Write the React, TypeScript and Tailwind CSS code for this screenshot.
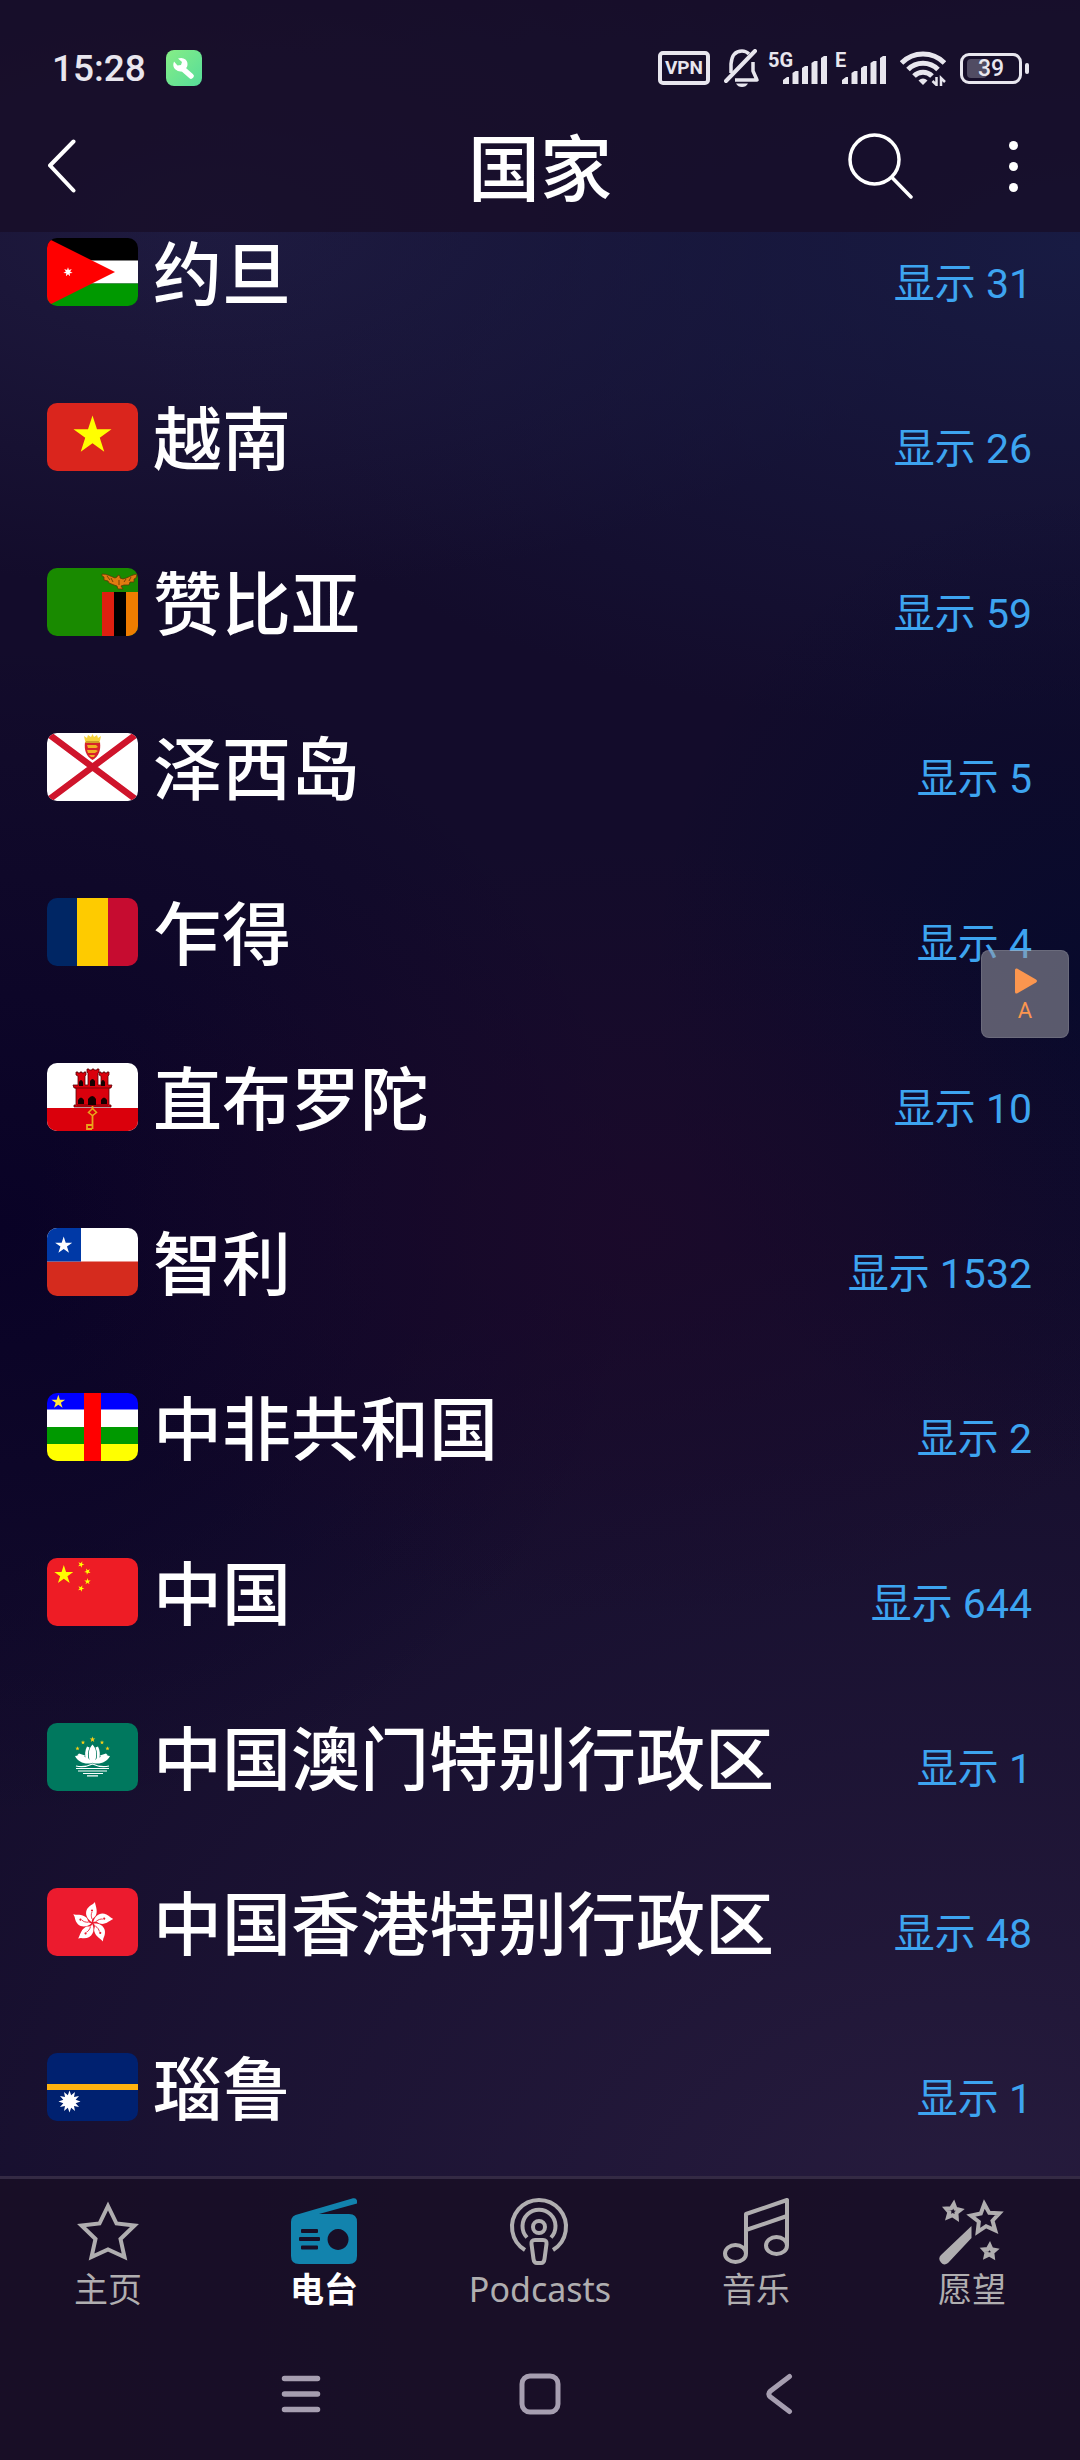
import type { ReactNode } from "react";

/* 生成星形顶点 */
function starPoints(cx: number, cy: number, r: number, inner = 0.382, tips = 5, turn = 0) {
  const points: string[] = [];
  for (let i = 0; i < tips * 2; i++) {
    const radius = i % 2 === 0 ? r : r * inner;
    const angle = (Math.PI * i) / tips - Math.PI / 2 + turn;
    points.push(`${(cx + radius * Math.cos(angle)).toFixed(2)},${(cy + radius * Math.sin(angle)).toFixed(2)}`);
  }
  return points.join(" ");
}

const flags: Record<string, ReactNode> = {
  jo: (
    <>
      <rect width="91" height="23" fill="#000" />
      <rect y="22.5" width="91" height="23" fill="#fff" />
      <rect y="45.5" width="91" height="23" fill="#009900" />
      <path d="M0 0 68 34 0 68Z" fill="#ff0000" />
      <polygon points={starPoints(21, 34, 4.8, 0.45, 7)} fill="#fff" />
    </>
  ),
  vn: (
    <>
      <rect width="91" height="68" fill="#da251d" />
      <polygon points={starPoints(45.5, 32.5, 20)} fill="#ffff00" />
    </>
  ),
  zm: (
    <>
      <rect width="91" height="68" fill="#198a00" />
      <rect x="55" y="24" width="12" height="44" fill="#de2010" />
      <rect x="67" y="24" width="12" height="44" fill="#000" />
      <rect x="79" y="24" width="12" height="44" fill="#ef7d00" />
      <path
        d="M55 6c5 0 8 2 13 4l2-1 1-2 2 1v2l3 1c5-1 8-4 14-5l-1 4-2 1 0 3-4 0-1 3-5 0-3 1 2 3-5 0-1-3-3-1-5-2-1-2-4-1 0-3-2-1z"
        fill="#e07a10"
        stroke="#5a3a08"
        strokeWidth="0.8"
      />
      <path d="M60 8l3 4M64 10l2 4M84 9l-2 4M79 11l-2 3M72 12v5" stroke="#6b3d05" strokeWidth="0.9" />
    </>
  ),
  je: (
    <>
      <rect width="91" height="68" fill="#fff" />
      <path d="M0 0 91 68M91 0 0 68" stroke="#cf142b" strokeWidth="6.5" />
      <path d="M38 9h15c1 8-1 14-7.5 18C39 23 37 17 38 9Z" fill="#d8222a" />
      <path d="M40 12h9l2 2-2 1h-8zM40 17h9l2 1-3 2h-7zM42 22h6l-1 2h-3z" fill="#f0b020" />
      <path d="M37 3l3 2 1-3 3 2 1.5-3 1.5 3 3-2 1 3 3-2-1.5 7h-14z" fill="#f7d23c" />
      <path d="M39 9h13" stroke="#a86a10" strokeWidth="1" />
    </>
  ),
  td: (
    <>
      <rect width="31" height="68" fill="#002664" />
      <rect x="30" width="31" height="68" fill="#fecb00" />
      <rect x="61" width="30" height="68" fill="#c60c30" />
    </>
  ),
  gi: (
    <>
      <rect width="91" height="68" fill="#fff" />
      <rect y="45" width="91" height="23" fill="#da000c" />
      <path
        d="M27 44v-2h2V25h-2l-1-3h5V13l-2-1V9h2v1h2V9h2v1h2V9h2v3l-1 1v9h3V10l-1-1V6h2v1h3V6h2v1h3V6h2v3l-1 1v12h3v-9l-2-1V9h2v1h2V9h2v1h2V9h2v3l-1 1v9h4l-1 3h-2v17h2v2z"
        fill="#da000c"
        stroke="#5c0006"
        strokeWidth="0.8"
      />
      <path d="M28 25h35M30 42h31" stroke="#7a0008" strokeWidth="1" />
      <path
        d="M41 42v-6q4.5-6 8 0v6zM31 41v-4q3-5 6 0v4zM54 41v-4q3-5 6 0v4zM43 23v-5q2.5-4 5 0v5zM32 23v-4q2-4 4 0v4zM54 23v-4q2-4 4 0v4z"
        fill="#160000"
      />
      <path d="M45.5 43v23M45 62h-5v4h5" stroke="#e8a51c" strokeWidth="1.8" fill="none" />
      <path d="M45.5 45.5l4 4-4 3-4-3z" fill="#da000c" stroke="#e8a51c" strokeWidth="1.5" />
    </>
  ),
  cl: (
    <>
      <rect width="91" height="34" fill="#fff" />
      <rect y="33.5" width="91" height="35" fill="#d52b1e" />
      <rect width="34" height="33.5" fill="#0039a6" />
      <polygon points={starPoints(16.7, 17.5, 9)} fill="#fff" />
    </>
  ),
  cf: (
    <>
      <rect width="91" height="17" fill="#0000ff" />
      <rect y="16.5" width="91" height="18" fill="#fff" />
      <rect y="34" width="91" height="17" fill="#009900" />
      <rect y="51" width="91" height="17" fill="#ffff00" />
      <rect x="37" width="17" height="68" fill="#ff0000" />
      <polygon points={starPoints(11.3, 9, 7.2)} fill="#ffe83a" />
    </>
  ),
  cn: (
    <>
      <rect width="91" height="68" fill="#ee1c25" />
      <polygon points={starPoints(16.8, 17, 10)} fill="#ffff00" />
      <polygon points={starPoints(34, 6.5, 3.4, 0.382, 5, 0.4)} fill="#ffff00" />
      <polygon points={starPoints(40.5, 13.5, 3.4, 0.382, 5, 0.8)} fill="#ffff00" />
      <polygon points={starPoints(40.5, 23.5, 3.4)} fill="#ffff00" />
      <polygon points={starPoints(34, 30.5, 3.4, 0.382, 5, 0.4)} fill="#ffff00" />
    </>
  ),
  mo: (
    <>
      <rect width="91" height="68" fill="#00785e" />
      <g fill="#fbd116">
        <polygon points={starPoints(45.5, 16.5, 3)} />
        <polygon points={starPoints(36, 19.5, 2.3)} />
        <polygon points={starPoints(55, 19.5, 2.3)} />
        <polygon points={starPoints(30.5, 25.5, 2.3)} />
        <polygon points={starPoints(60.5, 25.5, 2.3)} />
      </g>
      <g fill="#fff">
        <path d="M45.5 21.5c4 4 5 11 2 18h-4c-3-7-2-14 2-18z" />
        <path d="M40 23.5l2.5 1c-2 5-2 9-.5 13l-3-1c-1.5-5-1-9 1-13zM51 23.5l-2.5 1c2 5 2 9 .5 13l3-1c1.5-5 1-9-1-13z" />
        <path d="M28 33c7-1 13 1 17.5 6.5C51 34 56 32 63 33c-3 6-10 9-17.5 7C38 42 31 39 28 33z" />
        <path d="M32 30.5l6 2-1 2-7-2zM59 30.5l-6 2 1 2 7-2z" />
      </g>
      <path
        d="M29 43q8 2 16.5-2 8.5 4 16.5 2M29 45.5h33M31 48h29M36 50.5h20M40 52.8h11"
        stroke="#fff"
        strokeWidth="1.2"
        fill="none"
      />
    </>
  ),
  hk: (
    <>
      <rect width="91" height="68" fill="#ec1b2e" />
      {[0, 72, 144, 216, 288].map((deg) => (
        <g key={deg} transform={`rotate(${deg} 45.5 35)`}>
          <path d="M45 34C38 30 36 21 46 16l2-2c0 3 3 8 1 13-1 3-5 3-4 7z" fill="#fff" />
          <path d="M45 31c-1-3-1-5 0-7" stroke="#ec1b2e" strokeWidth="0.8" fill="none" />
          <circle cx="45" cy="22.5" r="1.1" fill="#ec1b2e" />
        </g>
      ))}
    </>
  ),
  nr: (
    <>
      <rect width="91" height="68" fill="#002170" />
      <rect y="31" width="91" height="6" fill="#ffb20f" />
      <polygon points={starPoints(22.5, 48.5, 11, 0.58, 12)} fill="#fff" />
    </>
  ),
};

const countries = [
  { code: "jo", name: "约旦", count: 31 },
  { code: "vn", name: "越南", count: 26 },
  { code: "zm", name: "赞比亚", count: 59 },
  { code: "je", name: "泽西岛", count: 5 },
  { code: "td", name: "乍得", count: 4 },
  { code: "gi", name: "直布罗陀", count: 10 },
  { code: "cl", name: "智利", count: 1532 },
  { code: "cf", name: "中非共和国", count: 2 },
  { code: "cn", name: "中国", count: 644 },
  { code: "mo", name: "中国澳门特别行政区", count: 1 },
  { code: "hk", name: "中国香港特别行政区", count: 48 },
  { code: "nr", name: "瑙鲁", count: 1 },
];

const tabs = [
  {
    name: "主页",
    icon: (
      <path
        d="M33 8 41.5 25.5 59.5 27.5 45.5 41 49.5 59 33 51.5 16.5 59 20.5 41 6.5 27.5 24.5 25.5Z"
        fill="none"
        stroke="currentColor"
        strokeWidth="4"
        strokeMiterlimit="10"
      />
    ),
  },
  {
    name: "电台",
    active: true,
    icon: (
      <path
        fillRule="evenodd"
        fill="#1283ad"
        d="M8 16 62 .3q3-.8 4 2.2v3L28 16h30q8 0 8 8v34q0 8-8 8H8q-8 0-8-8V24q0-7 8-8ZM11 31q-1 0-1 1v2q0 1 1 1h15q1 0 1-1v-2q0-1-1-1ZM9 39q-1 0-1 1v2q0 1 1 1h19q1 0 1-1v-2q0-1-1-1ZM11 47.5q-1 0-1 1v2q0 1 1 1h15q1 0 1-1v-2q0-1-1-1ZM47 31a10.5 10.5 0 1 0 .1 0Z"
      />
    ),
  },
  {
    name: "Podcasts",
    icon: (
      <g fill="none" stroke="currentColor" strokeWidth="4" strokeLinecap="butt">
        <circle cx="32" cy="29" r="6" />
        <path d="M20 39.5a16.5 16.5 0 1 1 24 0" />
        <path d="M18 52a27 27 0 1 1 28 0" />
        <path d="M28 42h8q4 0 3.5 4l-2 15q-.5 4-3.5 4h-4q-3 0-3.5-4l-2-15q-.5-4 3.5-4z" />
      </g>
    ),
  },
  {
    name: "音乐",
    icon: (
      <g fill="none" stroke="currentColor" strokeWidth="4" strokeLinejoin="round">
        <ellipse cx="12.5" cy="55.5" rx="10.5" ry="8.5" />
        <ellipse cx="53.5" cy="47.5" rx="10.5" ry="8.5" />
        <path d="M23 55.5V16L64 2v45.5M23 32 64 18" />
      </g>
    ),
  },
  {
    name: "愿望",
    icon: (
      <>
        <polygon
          points={starPoints(46.5, 21, 15, 0.48, 5, -0.08)}
          fill="none"
          stroke="currentColor"
          strokeWidth="4"
          strokeMiterlimit="10"
        />
        <polygon points={starPoints(14, 13.5, 7.5, 0.5, 5, 0.1)} fill="none" stroke="currentColor" strokeWidth="4" />
        <polygon points={starPoints(50.5, 53.5, 6, 0.5, 5, 0.05)} fill="none" stroke="currentColor" strokeWidth="4" />
        <path d="M32.5 28v12L9 65q-4 3-7-.5-3.5-4 0-7.5Z" fill="currentColor" />
      </>
    ),
  },
];

function Signal({ label, width }: { label: string; width: string }) {
  return (
    <div className={`relative flex h-8 items-end justify-end ${width}`}>
      <span className="absolute top-0 left-0 text-[20px] leading-4 font-bold">{label}</span>
      <svg viewBox="0 0 44 28" className="h-7 w-11" fill="currentColor">
        <path d="M0 28v-4l4-3h2v7zM9.5 28V17l3-2h3v13zM19 28V12l3-2h3v18zM28.5 28V7l3-2h3v23zM38 28V2l3-2h3v28z" />
      </svg>
    </div>
  );
}

function StatusBar() {
  return (
    <div className="flex h-[100px] items-center justify-between pt-9 pr-[51px] pl-[52px] text-[#e8e6ee]">
      <div className="flex items-center gap-5">
        <span className="text-[37px] leading-none font-medium">15:28</span>
        <svg viewBox="0 0 36 36" className="size-9">
          <defs>
            <linearGradient id="tool" x1="0" y1="0" x2="1" y2="1">
              <stop offset="0" stopColor="#86ee86" />
              <stop offset="1" stopColor="#56dc9a" />
            </linearGradient>
          </defs>
          <rect width="36" height="36" rx="8" fill="url(#tool)" />
          <path d="M17 19l8 7" stroke="#fff" strokeWidth="5.5" strokeLinecap="round" />
          <path d="M12 8.5l4 3.5-1 3-3.5.5-3.5-4q-2 5 1.5 8t7.5 1.5l4-4q1.5-5-1.5-7.5t-7.5-1z" fill="#fff" />
        </svg>
      </div>
      <div className="flex items-center gap-3.5">
        <span className="flex h-[34px] w-[52px] items-center justify-center rounded-[5px] border-4 border-current text-[19px] font-bold">
          VPN
        </span>
        <div className="flex items-center gap-2">
          <svg viewBox="0 0 36 38" className="h-[38px] w-9" fill="none" stroke="currentColor" strokeWidth="3.5">
            <path d="M2 32 31 2" strokeWidth="4" strokeLinecap="round" />
            <path d="M7 24V15Q8 2 18 2q4 0 7 3M29 13v9l4 9H11" strokeLinejoin="round" />
            <path d="M12 34.5h12q-2 3.5-6 3.5t-6-3.5z" fill="currentColor" stroke="none" />
          </svg>
          <Signal label="5G" width="w-[59px]" />
          <Signal label="E" width="w-[51px]" />
        </div>
        <svg viewBox="0 0 46 35" className="h-[35px] w-[46px]" fill="none" stroke="currentColor" strokeWidth="5">
          <path d="M1.5 12a30 30 0 0 1 43 0M8 18.5a21 21 0 0 1 30 0M14 25a12.5 12.5 0 0 1 18 0" />
          <path d="M23 34l-4.5-4.5q4.5-4 9 0z" fill="currentColor" stroke="none" />
          <path d="M36.5 26v8l-4-4M41 35v-8l4 4" strokeWidth="2.5" />
        </svg>
        <div className="flex items-center gap-[3px]">
          <div className="relative flex h-[31px] w-[62px] items-center justify-center rounded-[9px] border-[3px] border-current">
            <span className="absolute top-[3px] left-[4px] h-[19px] w-[20px] rounded-[4px] bg-[#514c63]" />
            <span className="relative text-[23px] leading-none font-medium">39</span>
          </div>
          <span className="h-[11px] w-1 rounded-sm bg-current" />
        </div>
      </div>
    </div>
  );
}

function Header() {
  return (
    <header className="bg-[#180e28]/80">
      <StatusBar />
      <div className="grid h-[132px] grid-cols-[1fr_auto_1fr] items-center px-12">
        <button aria-label="返回" className="w-8">
          <svg viewBox="0 0 32 54" className="h-[54px] w-8" fill="none" stroke="currentColor" strokeWidth="4">
            <path d="M25.5 2.5 2 26.5 25.5 51.5" strokeLinecap="round" strokeLinejoin="round" />
          </svg>
        </button>
        <h1 className="pt-2.5 text-[72px] leading-none font-medium">国家</h1>
        <div className="flex items-center justify-end gap-[84px] pr-1">
          <button aria-label="搜索">
            <svg viewBox="0 0 66 66" className="size-[66px]" fill="none" stroke="currentColor" strokeWidth="3.5">
              <circle cx="26.5" cy="26.5" r="24.5" />
              <path d="M44.5 45 63 64" strokeLinecap="round" />
            </svg>
          </button>
          <button aria-label="更多" className="flex w-[30px] flex-col items-center gap-3">
            <span className="size-[9px] rounded-full bg-white" />
            <span className="size-[9px] rounded-full bg-white" />
            <span className="size-[9px] rounded-full bg-white" />
          </button>
        </div>
      </div>
    </header>
  );
}

export default function App() {
  return (
    <div
      lang="zh-CN"
      className="relative flex min-h-screen flex-col bg-[#130c2b] bg-[radial-gradient(ellipse_55%_16%_at_58%_50%,#1c092acc,transparent),radial-gradient(ellipse_60%_24%_at_0%_50%,#090226,transparent),radial-gradient(ellipse_40%_20%_at_100%_40%,#080a2c,transparent),radial-gradient(ellipse_90%_20%_at_100%_10%,#181b43,transparent),radial-gradient(ellipse_70%_15%_at_20%_9%,#1f1b40,transparent),radial-gradient(ellipse_120%_42%_at_90%_92%,#271c3e,transparent)] font-['Roboto','Noto_Sans_CJK_SC',sans-serif] text-white"
    >
      <Header />

      <main className="flex-1 overflow-hidden pt-1.5 pb-[55px]">
        <ul className="flex flex-col gap-[97px] pr-12 pl-[47px]">
          {countries.map((country) => (
            <li key={country.code}>
              <a href={`#${country.code}`} className="flex h-[68px] items-center">
                <svg viewBox="0 0 91 68" className="h-[68px] w-[91px] shrink-0 rounded-[10px]">
                  {flags[country.code]}
                </svg>
                <span className="ml-[15px] pt-2.5 text-[69px] leading-[68px] font-medium whitespace-nowrap">{country.name}</span>
                <span className="ml-auto pt-6 text-[41px] leading-none whitespace-nowrap text-[#3da4f0]">
                  显示 {country.count}
                </span>
              </a>
            </li>
          ))}
        </ul>
      </main>

      <footer className="border-t-[3px] border-[#342a44] bg-[#180e26]/90">
        <nav className="grid grid-cols-5 pt-[19px]">
          {tabs.map((tab) => (
            <a
              key={tab.name}
              href={`#${tab.name}`}
              className={`flex flex-col items-center ${tab.active ? "font-bold text-white" : "text-[#b0aeb0]"}`}
            >
              <svg viewBox="0 0 66 68" className="h-[68px] w-[66px] overflow-visible">
                {tab.icon}
              </svg>
              <span className="font-['Noto_Sans','Noto_Sans_CJK_SC',sans-serif] text-[34px] leading-[46px]">{tab.name}</span>
            </a>
          ))}
        </nav>

        {/* 系统导航键 */}
        <div className="grid h-[148px] grid-cols-3 items-center px-[181px] pt-4 text-[#a69eb0]">
          <button aria-label="最近任务" className="justify-self-center">
            <svg viewBox="0 0 42 42" className="size-[42px]" stroke="currentColor" strokeWidth="5.5">
              <path d="M4.5 5.5h33M4.5 21h33M4.5 36.5h33" strokeLinecap="round" />
            </svg>
          </button>
          <button aria-label="主屏幕" className="justify-self-center">
            <svg viewBox="0 0 42 42" className="size-[42px]" fill="none" stroke="currentColor" strokeWidth="5">
              <rect x="3" y="3" width="36" height="36" rx="8" />
            </svg>
          </button>
          <button aria-label="系统返回" className="justify-self-center">
            <svg viewBox="0 0 42 42" className="size-[42px]" fill="none" stroke="currentColor" strokeWidth="5">
              <path d="M31.5 3.5 12.5 18q-3.5 3 0 6L31.5 38.5" strokeLinecap="round" strokeLinejoin="round" />
            </svg>
          </button>
        </div>
      </footer>

      {/* 悬浮播放按钮 */}
      <button
        aria-label="播放 A"
        className="absolute top-[950px] right-[11px] flex size-[88px] flex-col items-center justify-center gap-1.5 rounded-lg border border-white/10 bg-[#9c9ca4]/55 text-[#fb964f]"
      >
        <svg viewBox="0 0 24 28" className="h-7 w-6" fill="currentColor">
          <path d="M4 1.5 23 12.5q2 1.5 0 3L4 26.5q-2 .5-2-1.5V3q0-2 2-1.5z" />
        </svg>
        <span className="text-[22px] leading-5">A</span>
      </button>
    </div>
  );
}
